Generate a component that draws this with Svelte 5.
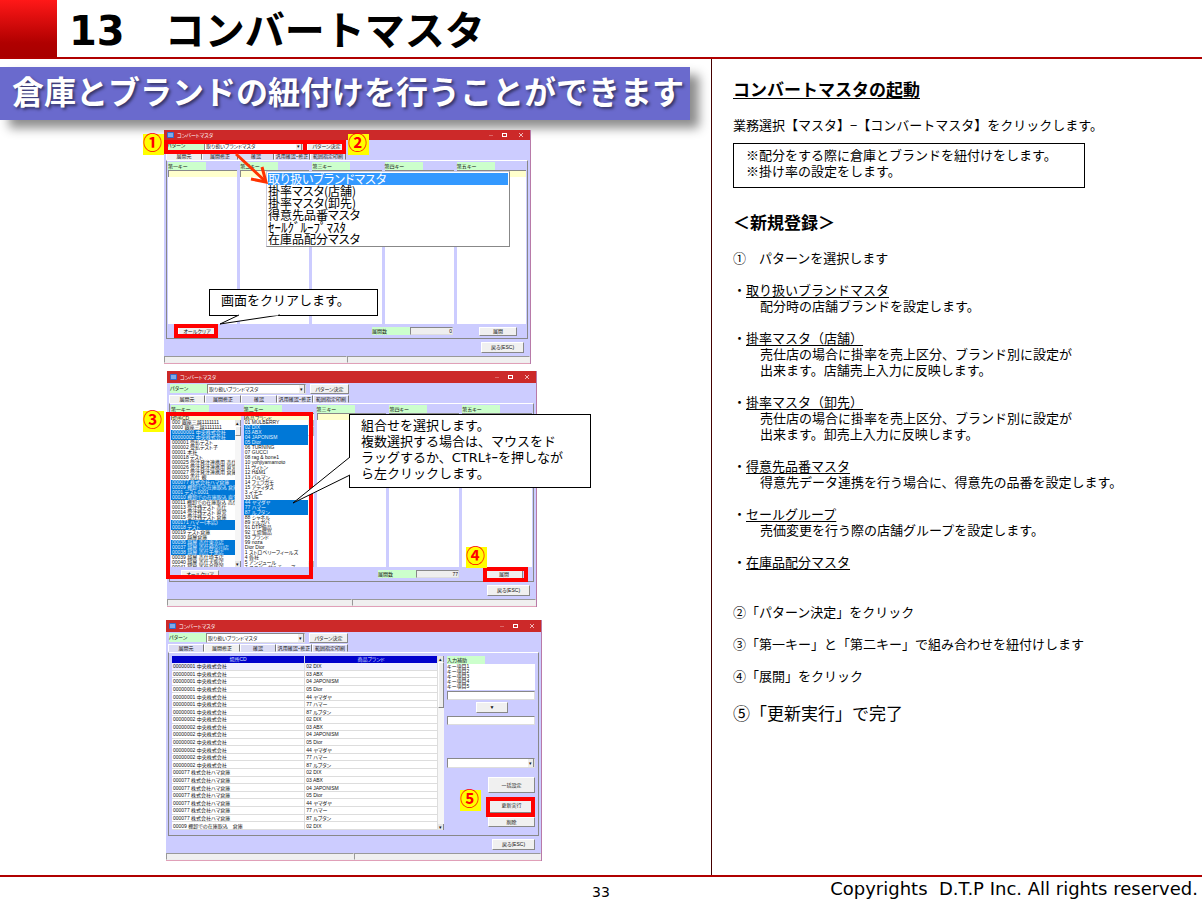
<script>
  const patterns = ['取り扱いブランドマスタ', '掛率マスタ(店舗)', '掛率マスタ(卸先)', '得意先品番マスタ', 'ｾｰﾙｸﾞﾙｰﾌﾟﾏｽﾀ', '在庫品配分マスタ'];
  const tabs = ['展開元', '展開修正', '確認', '汎用確認・修正', '範囲指定印刷'];
  const keys = ['第一キー', '第二キー', '第三キー', '第四キー', '第五キー'];

  const places = [
    ['000 銀座三越1111111'], ['0000 銀座三越1111111'], ['00000001 中央株式会社', 1], ['00000002 中央株式会社', 1],
    ['000001 受払テスト'], ['000002 受払テスト子'], ['00001 本社'], ['000018 テスト'],
    ['000025 受注発注連携用 売仕'], ['000026 受注発注連携用 直営'], ['000027 受注発注連携用 倉庫'], ['000030 売仕 親'],
    ['000077 株式会社ハマ倉庫', 1], ['00009 棚卸での在庫取込 倉庫', 1], ['0001 テスト0001', 1], ['00010 棚卸での在庫取込 直営', 1],
    ['00011 棚卸での在庫取込 売仕'], ['00013 受注残テスト 売仕'], ['00014 受注残テスト 直営'], ['00015 受注残テスト 倉庫'],
    ['000171 ハマー(本店)', 1], ['00018 テスト', 1], ['00019 テスト倉庫'], ['00030 越屋倉庫'],
    ['00036 越屋 売仕東京店', 1], ['00037 越屋 売仕神奈川店', 1], ['00038 越屋 売仕千葉店', 1],
    ['00039 越屋 売仕埼玉店'], ['00040 越屋 売仕大阪店'], ['00041 越屋 売仕兵庫店']
  ];
  const brands = [
    ['01 MULBERRY'], ['02 DIX', 1], ['03 ABX', 1], ['04 JAPONISM', 1], ['05 Dior', 1], ['06 TURNING'], ['07 GUCCI'],
    ['08 rag & bone1'], ['10 yohjiyamamoto'], ['11 ヴィトン'], ['12 H&M1'], ['13 バルマン'], ['14 フェラガモ'],
    ['15 アディダス'], ['3 イチエ'], ['33 UE'], ['44 ヤマダヤ', 1], ['77 ハマー', 1], ['87 ルブタン', 1],
    ['88 シャネル'], ['89 ドルガバ'], ['91 DTP備品'], ['92 工場備品'], ['93 ブランド'], ['99 noza'], ['Dior Dior'],
    ['1 ストロベリーフィールズ'], ['4 各社'], ['5 アンジュール'], ['7 ユニバーサルチューズ']
  ];

  const brandCycle = ['02 DIX', '03 ABX', '04 JAPONISM', '05 Dior', '44 ヤマダヤ', '77 ハマー', '87 ルブタン'];
  const rows = [
    ...['00000001 中央株式会社', '00000002 中央株式会社', '000077 株式会社ハマ倉庫'].flatMap((p) => brandCycle.map((b) => [p, b])),
    ['00009 棚卸での在庫取込　倉庫', '02 DIX']
  ];

  const topics = [
    ['取り扱いブランドマスタ', ['配分時の店舗ブランドを設定します。']],
    ['掛率マスタ（店舗）', ['売仕店の場合に掛率を売上区分、ブランド別に設定が', '出来ます。店舗売上入力に反映します。']],
    ['掛率マスタ（卸先）', ['売仕店の場合に掛率を売上区分、ブランド別に設定が', '出来ます。卸売上入力に反映します。']],
    ['得意先品番マスタ', ['得意先データ連携を行う場合に、得意先の品番を設定します。']],
    ['セールグループ', ['売価変更を行う際の店舗グループを設定します。']],
    ['在庫品配分マスタ', []]
  ];
</script>

{#snippet top(id, active)}
  <div class="titlebar">
    <svg class="appicon" viewBox="0 0 7 6" width="7" height="6"><rect width="7" height="6" rx="1" fill="#2f6fd0" /><path d="M1 2h5M1 4h5" stroke="#cfe4ff" /></svg>
    <span class="caption">コンバートマスタ</span>
    <svg class="controls" viewBox="0 0 44 8" width="44" height="8" fill="none" stroke="#f0b8b8"><path d="M3 4.5h4" stroke="#dd6666" /><rect x="16.5" y="2.5" width="4" height="3" stroke="#fff" /><path d="M33 2l4 4M37 2l-4 4" /></svg>
  </div>
  <div class="pattern">
    <label class="tag" for="pat{id}">パターン</label>
    <span class="combo">
      <select id="pat{id}">{#each patterns as p}<option>{p}</option>{/each}</select>
      <span class="arrow">▾</span>
    </span>
    <button>パターン決定</button>
  </div>
  <div class="tabs" role="tablist">
    {#each tabs as t, i}<button role="tab" aria-selected={i === active} class:active={i === active}>{t}</button>{/each}
  </div>
{/snippet}

{#snippet bottom()}
  <div class="back"><button>戻る(ESC)</button></div>
  <div class="status"><span></span><span></span></div>
{/snippet}

{#snippet keyWindow(id, filled)}
  {@render top(id, 0)}
  <div class="panel">
    <div class="keys">
      {#each keys as k, i}
        <div class="key">
          <label class="tag" for="k{id}{i}">{k}</label>
          <input id="k{id}{i}" value={filled && i === 0 ? '場所CD' : filled && i === 1 ? '商品ブランド' : ''} />
          {#if filled && i < 2}
            <div class="listwrap">
              <ul role="listbox" aria-multiselectable="true" aria-label={k}>
                {#each i === 0 ? places : brands as [text, on]}<li role="option" aria-selected={!!on} class:on>{text}</li>{/each}
              </ul>
              <div class="scroll" class:low={i === 1}><i>▴</i><b></b><i>▾</i></div>
            </div>
          {:else}
            <div class="listwrap"></div>
          {/if}
        </div>
      {/each}
    </div>
    <div class="actions">
      <button>オールクリア</button>
      <label class="tag count" for="n{id}">展開数</label>
      <input id="n{id}" value={filled ? '77' : '0'} readonly />
      <button>展開</button>
    </div>
  </div>
  {@render bottom()}
{/snippet}

<div class="page">
  <header><div class="block"></div><h1>13　コンバートマスタ</h1></header>

  <main>
    <section class="shots">
      <p class="banner">倉庫とブランドの紐付けを行うことができます</p>

      <figure class="first">
        <div class="window">{@render keyWindow('a', false)}</div>
        <ul class="menu">{#each patterns as p, i}<li class:on={i === 0} class:half={i === 4}>{p}</li>{/each}</ul>
        <div class="frame f1"></div>
        <div class="frame f2"></div>
        <div class="frame f3"></div>
        <svg class="pointer" viewBox="0 0 40 36" width="40" height="36" fill="none" stroke="#ff3300" stroke-width="3"><path d="M4 3L32 29" /><path d="M19 28L34 31L30 16" /></svg>
        <span class="num n1">①</span>
        <span class="num n2">②</span>
        <div class="callout c1">画面をクリアします。
          <svg viewBox="0 0 64 12" width="64" height="12"><path d="M21 1L2 10L62 1" fill="#fff" stroke="#000" /><path d="M22 .5H60" stroke="#fff" stroke-width="2" /></svg>
        </div>
      </figure>

      <figure class="second">
        <div class="window">{@render keyWindow('b', true)}</div>
        <div class="frame f4"></div>
        <div class="frame f5"></div>
        <span class="num n3">③</span>
        <span class="num n4">④</span>
        <div class="callout c2">組合せを選択します。<br />複数選択する場合は、マウスをド<br />ラッグするか、CTRLｷｰを押しなが<br />ら左クリックします。
          <svg viewBox="0 0 60 50" width="60" height="50"><path d="M58 2L1 48L58 20" fill="#fff" stroke="#000" /><path d="M58 3V19" stroke="#fff" stroke-width="2" /></svg>
        </div>
      </figure>

      <figure class="third">
        <div class="window">
          {@render top('c', 1)}
          <div class="panel split">
            <div class="gridwrap">
              <table>
                <thead><tr><th>場所CD</th><th>商品ブランド</th></tr></thead>
                <tbody>{#each rows as [p, b]}<tr><td>{p}</td><td>{b}</td></tr>{/each}</tbody>
              </table>
              <div class="scroll"><i>▴</i><b></b><i>▾</i></div>
            </div>
            <div class="assist">
              <span class="tag">入力補助</span>
              <ul>{#each [1, 2, 3, 4, 5] as n}<li>キー項目{n}</li>{/each}</ul>
              <input aria-label="入力値" />
              <button class="down">▼</button>
              <input aria-label="変換値" />
              <span class="combo"><select aria-label="候補"><option></option></select><span class="arrow">▾</span></span>
              <button class="tall">一括設定</button>
              <button class="tall run">更新実行</button>
              <button class="del">削除</button>
            </div>
          </div>
          {@render bottom()}
        </div>
        <div class="frame f6"></div>
        <span class="num n5">⑤</span>
      </figure>
    </section>

    <article>
      <h2><u>コンバートマスタの起動</u></h2>
      <p>業務選択【マスタ】−【コンバートマスタ】をクリックします。</p>
      <div class="note">※配分をする際に倉庫とブランドを紐付けをします。<br />※掛け率の設定をします。</div>
      <h2 class="new">＜新規登録＞</h2>
      <p>①　パターンを選択します</p>
      <ul class="topics">
        {#each topics as [name, lines]}
          <li>・<u>{name}</u>{#each lines as l}<div>{l}</div>{/each}</li>
        {/each}
      </ul>
      <p class="step2">②「パターン決定」をクリック</p>
      <p>③「第一キー」と「第二キー」で組み合わせを紐付けします</p>
      <p>④「展開」をクリック</p>
      <p class="last">⑤「更新実行」で完了</p>
    </article>
  </main>

  <footer><span></span><span class="no">33</span><span class="copy">Copyrights  D.T.P Inc. All rights reserved.</span></footer>
</div>

<style>
  :global(body) { margin: 0; background: #fff; }
  * { box-sizing: border-box; }
  .page { min-height: 100vh; display: flex; flex-direction: column; font-family: "Noto Sans CJK JP", sans-serif; font-size: 13px; line-height: 16px; color: #000; }
  h1, h2, p, ul, figure { margin: 0; padding: 0; }
  ul { list-style: none; }

  header { display: flex; border-bottom: 2px solid #b00000; }
  .block { width: 57px; background: linear-gradient(#ff1818, #b00000 75%, #a80000); }
  h1 { font: bold 40px/51px "DejaVu Sans", "Noto Sans CJK JP", sans-serif; padding: 6px 0 0 12px; }

  main { flex: 1; display: grid; grid-template-columns: 711fr 491fr; }
  .shots { padding-top: 8px; min-width: 0; }
  .banner { margin-right: 21px; padding: 0 0 7px 12px; background: #6a6acd; color: #fff; font-weight: bold; font-size: 32px; line-height: 46px; white-space: nowrap; text-shadow: 2px 2px 3px rgba(0, 0, 0, .5); box-shadow: 9px 8px 10px rgba(0, 0, 0, .45); }
  figure { position: relative; }
  .first { width: 367px; margin: 10px 0 0 164px; --title: 10px; }
  .second { width: 370px; margin: 7px 0 0 167px; --title: 12px; }
  .third { width: 376px; margin: 13px 0 0 166px; --title: 12px; }

  .window { background: #ccccff; font-family: "Liberation Sans", "Noto Sans CJK JP", sans-serif; font-size: 5px; line-height: 7px; font-feature-settings: "palt"; color: #111; border-right: 1px solid #b87aa8; }
  .window button, .window input, .window select { font: inherit; font-feature-settings: inherit; color: inherit; margin: 0; padding: 0; border-radius: 0; min-width: 0; appearance: none; }
  .window button { background: #f0f0f0; border: 1px solid; border-color: #fff #888 #888 #fff; text-align: center; white-space: nowrap; line-height: 5px; }
  .window input, .window select { border: 1px solid; border-color: #888 #ddd #ddd #888; background: #fff; display: block; width: 100%; outline: none; }
  .tag { background: #ccffcc; display: block; white-space: nowrap; }
  .titlebar { height: var(--title); background: #cc2929; display: flex; align-items: center; gap: 3px; padding-left: 3px; color: #fff; }
  .controls { margin-left: auto; }
  .pattern { display: flex; padding: 1px 0 1px 3px; }
  .pattern .tag { width: 37px; height: 9px; line-height: 9px; }
  .pattern button { width: 39px; height: 10px; margin-left: 4px; }
  .combo { position: relative; width: 99px; display: block; }
  .combo select { height: 10px; padding-left: 1px; line-height: 8px; }
  .arrow { position: absolute; right: 1px; top: 1px; width: 6px; height: 8px; background: #eee; border-right: 1px solid #888; text-align: center; line-height: 8px; pointer-events: none; }
  .tabs { display: flex; padding-left: 2px; }
  .window .tabs button { width: 36px; height: 8px; background: #dcdcf4; border-color: #fff #777 transparent #fff; }
  .window .tabs button.active { background: #f0f0f0; }

  .panel { margin: 0 2px; border: 1px solid; border-color: #fff #888 #888 #888; padding: 1px 1px 0; }
  .keys { display: grid; grid-template-columns: repeat(5, 1fr); gap: 3px; }
  .key { min-width: 0; }
  .key .tag { width: 38px; line-height: 8px; }
  .window .key input { height: 7px; background: #ffffcc; line-height: 5px; border-width: 1px 0 0 1px; }
  .listwrap { height: 147px; background: #fff; display: flex; overflow: hidden; }
  .listwrap ul { flex: 1; min-width: 0; overflow: hidden; white-space: nowrap; line-height: 5px; height: 150px; }
  .listwrap li { height: 5px; padding-left: 1px; }
  .listwrap .on { background: #0078d7; color: #e4f2ff; }
  .scroll { width: 6px; flex: none; background: #f6f6f6; display: flex; flex-direction: column; }
  .scroll i { height: 6px; background: #e6e6e6; font-style: normal; line-height: 6px; text-align: center; border-right: 1px solid #888; }
  .scroll b { height: 10px; background: #eee; border: 1px solid; border-color: #fff #888 #888 #fff; }
  .scroll i:last-child { margin-top: auto; }
  .scroll.low { opacity: .6; }
  .actions { height: 14px; display: flex; align-items: center; padding: 0 9px 0 10px; }
  .actions button { width: 38px; height: 9px; }
  .actions .count { width: 38px; height: 8px; line-height: 8px; margin-left: auto; }
  .window .actions input { width: 43px; height: 8px; margin-right: 26px; text-align: right; background: #eee; line-height: 6px; }
  .back { display: flex; justify-content: flex-end; padding: 3px 6px; }
  .back button { width: 43px; height: 11px; }
  .status { display: flex; height: 8px; background: #f0f0f0; border-bottom: 1px solid #e0a0b8; }
  .status span { flex: 1; border: 1px solid; border-color: #999 #eee #eee #999; }

  .split { display: grid; grid-template-columns: 272px 1fr; gap: 3px; padding: 3px 3px 5px 3px; }
  .gridwrap { display: flex; background: #fff; }
  table { flex: 1; width: 100%; height: 174px; border-collapse: collapse; table-layout: fixed; }
  th { width: 50%; background: #0000cc; color: #dde2ff; font-weight: normal; padding: 0; line-height: 7px; }
  th, td { border: 0 solid #ddd; border-right-width: 1px; white-space: nowrap; }
  td { padding: 0 1px; line-height: 6px; border-bottom-width: 1px; }
  tbody tr:first-child { background: #eeeeff; }
  .gridwrap .scroll b { height: 46px; }
  .assist { display: flex; flex-direction: column; align-items: flex-end; }
  .assist > .tag { width: 38px; line-height: 8px; align-self: flex-start; }
  .assist ul { width: 100%; height: 26px; background: #fff; line-height: 5px; }
  .window .assist input { height: 9px; margin-top: 1px; }
  .window .assist .down { width: 32px; height: 11px; margin: 2px 27px; }
  .assist .combo { width: 100%; margin: 33px 0 9px; }
  .assist button { width: 47px; }
  .assist .tall { height: 16px; }
  .assist .run { margin: 4px 0; }
  .assist .del { height: 10px; }

  .menu { position: absolute; left: 102px; top: 41px; width: 244px; padding: 1px; background: #fff; border: 1px solid; border-color: #ccd #888 #888 #ccd; font-size: 12px; line-height: 12px; font-feature-settings: "palt"; }
  .menu .on { background: #3399ff; color: #fff; }
  .menu .half { font-size: 13px; font-feature-settings: normal; }
  .frame { position: absolute; border: 4px solid #f00; }
  .f1 { left: 0; top: 10px; width: 143px; height: 14px; }
  .f2 { left: 139px; top: 10px; width: 43px; height: 14px; }
  .f3 { left: 10px; top: 194px; width: 44px; height: 14px; }
  .f4 { left: -1px; top: 41px; width: 147px; height: 167px; }
  .f5 { left: 316px; top: 196px; width: 45px; height: 15px; }
  .f6 { left: 320px; top: 177px; width: 49px; height: 20px; }
  .pointer { position: absolute; left: 68px; top: 21px; }
  .num { position: absolute; width: 21px; height: 21px; background: #ff0; color: #f00; font-weight: bold; font-size: 19px; line-height: 15px; }
  .n1 { left: -21px; top: 4px; }
  .n2 { left: 184px; top: 4px; }
  .n3 { left: -24px; top: 40px; }
  .n4 { left: 299px; top: 176px; }
  .n5 { left: 294px; top: 170px; }
  .callout { position: absolute; background: #fff; border: 1px solid #000; padding-left: 11px; white-space: nowrap; font-family: "DejaVu Sans", "Noto Sans CJK JP", sans-serif; }
  .callout svg { position: absolute; fill: none; }
  .c1 { left: 45px; top: 159px; width: 169px; padding-top: 3px; padding-bottom: 6px; }
  .c1 svg { left: 8px; top: 24px; }
  .c2 { left: 182px; top: 43px; width: 242px; padding-top: 3px; padding-bottom: 5px; }
  .c2 svg { left: -58px; top: 40px; }

  article { border-left: 1px solid #400; padding: 18px 0 20px 21px; }
  h2 { font-size: 17px; line-height: 24px; }
  u { text-underline-offset: 2px; }
  article p { margin-top: 16px; }
  .note { width: 352px; max-width: 96%; border: 1px solid #000; margin-top: 10px; padding: 3px 12px 8px; }
  .new { margin-top: 22px; }
  .topics { margin-top: 16px; display: grid; gap: 16px; }
  .topics div { padding-left: 27px; }
  article .step2 { margin-top: 34px; }
  article .last { font-size: 17px; line-height: 24px; margin-top: 17px; }

  footer { border-top: 2px solid #b00000; height: 27px; display: grid; grid-template-columns: 1fr auto 1fr; font-family: "DejaVu Sans", sans-serif; }
  .no { font-size: 14px; line-height: 30px; }
  .copy { font-size: 18px; line-height: 24px; white-space: pre; text-align: right; padding-right: 4px; }
</style>
